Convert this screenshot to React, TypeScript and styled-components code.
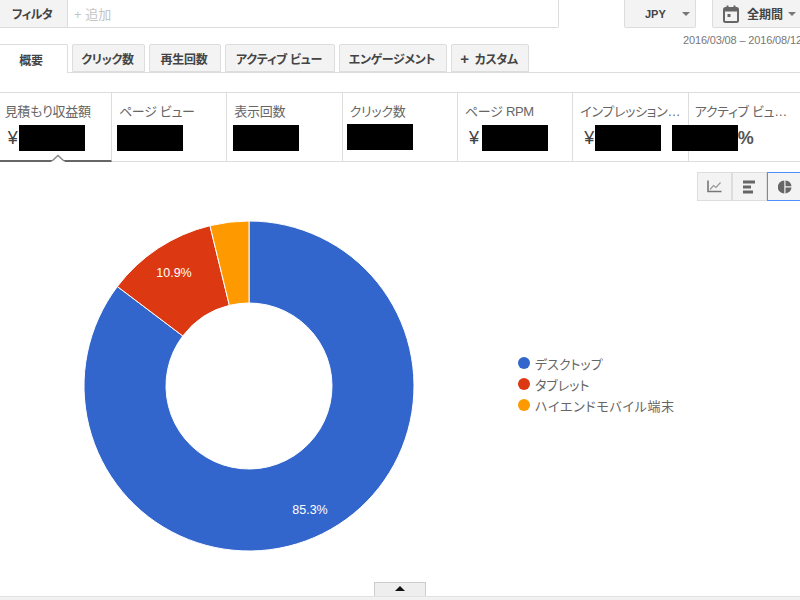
import React from "react";
import styled, { createGlobalStyle } from "styled-components";

const Global = createGlobalStyle`
  html, body { margin: 0; padding: 0; background: #fff; }
  * { box-sizing: border-box; }
  body {
    font-family: "Liberation Sans", "Noto Sans CJK JP", sans-serif;
    font-feature-settings: "palt";
  }
`;

const Page = styled.div`
  width: 800px;
  height: 600px;
  overflow: hidden;
  display: flex;
  flex-direction: column;
  color: #444;
`;

const TopBar = styled.div`
  display: flex;
  height: 28px;
  flex: none;
`;

const FilterBox = styled.div`
  width: 559px;
  flex: none;
  display: flex;
  border-right: 1px solid #ddd;
  border-bottom: 1px solid #ddd;
  border-bottom-right-radius: 2px;
`;

const FilterLabel = styled.div`
  width: 68px;
  background: #f3f3f3;
  border-right: 1px solid #ddd;
  display: flex;
  align-items: center;
  padding-left: 12px;
  font-size: 12px;
  letter-spacing: -0.6px;
  font-weight: 700;
  color: #444;
`;

const AddInput = styled.div`
  padding: 5px 0 0 6px;
  font-size: 13px;
  line-height: 20px;
  color: #c4c4c4;
`;

const DropButton = styled.div<{ $width: number; $left: number; $pad: number }>`
  width: ${(p) => p.$width}px;
  margin-left: ${(p) => p.$left}px;
  padding-left: ${(p) => p.$pad}px;
  flex: none;
  display: flex;
  align-items: center;
  background: #f3f3f3;
  border: 1px solid #ddd;
  border-top: none;
  border-radius: 0 0 2px 2px;
  font-size: 11px;
  font-weight: 700;
  color: #444;
`;

const PeriodLabel = styled.span`
  margin-left: 7px;
  font-size: 12px;
`;

const Caret = styled.span<{ $left: number }>`
  width: 0;
  height: 0;
  margin-left: ${(p) => p.$left}px;
  border-left: 4px solid transparent;
  border-right: 4px solid transparent;
  border-top: 4px solid #777;
`;

const DateRow = styled.div`
  height: 16px;
  flex: none;
  padding: 5px 0 0 683px;
  font-size: 11px;
  letter-spacing: -0.15px;
  line-height: 14px;
  color: #777;
  white-space: nowrap;
`;

const Tabs = styled.div`
  height: 29px;
  flex: none;
  display: flex;
  gap: 4px;
  border-bottom: 1px solid #ddd;
`;

const Tab = styled.div<{ $width: number; $active?: boolean }>`
  width: ${(p) => p.$width}px;
  height: ${(p) => (p.$active ? 29 : 28)}px;
  margin-left: ${(p) => (p.$active ? -1 : 0)}px;
  padding-right: ${(p) => (p.$active ? 5 : 2)}px;
  display: flex;
  align-items: center;
  justify-content: center;
  gap: 6px;
  background: ${(p) => (p.$active ? "#fff" : "#f3f3f3")};
  border: 1px solid #ddd;
  border-bottom: ${(p) => (p.$active ? "none" : "1px solid #ddd")};
  border-radius: 2px 2px 0 0;
  font-size: 12px;
  letter-spacing: -0.3px;
  font-weight: 700;
  color: #444;
  white-space: nowrap;
`;

const PlusMark = styled.span`
  font-size: 15px;
  line-height: 15px;
`;

const Metrics = styled.div`
  margin: 19px 0 0 -3.33px;
  height: 70px;
  flex: none;
  display: flex;
  border-top: 1px solid #ddd;
  border-bottom: 1px solid #ddd;
`;

const Metric = styled.div<{ $active?: boolean; $pad: number }>`
  position: relative;
  flex: none;
  width: 115.33px;
  height: 69px;
  padding: 10px 0 0 ${(p) => p.$pad}px;
  border-right: 1px solid #ddd;
  border-bottom: ${(p) => (p.$active ? "2px solid #666" : "none")};
`;

const MetricTitle = styled.div`
  font-size: 13px;
  letter-spacing: -0.3px;
  line-height: 18px;
  color: #666;
  padding-right: 4px;
  white-space: nowrap;
  overflow: hidden;
  text-overflow: ellipsis;
`;

const MetricValue = styled.div`
  margin-top: 4px;
  display: flex;
  align-items: center;
  height: 26px;
  font-size: 18px;
  color: #444;
`;

const Yen = styled.span<{ $left: number }>`
  margin-left: ${(p) => p.$left}px;
`;

const Suffix = styled.span`
  font-weight: 700;
  color: #555;
`;

const Mask = styled.div<{ $left: number; $top?: number }>`
  flex: none;
  width: 66px;
  height: 26px;
  background: #000;
  margin-left: ${(p) => p.$left}px;
  margin-top: ${(p) => p.$top ?? 0}px;
`;

const Notch = styled.svg`
  position: absolute;
  left: 54px;
  bottom: -2px;
  display: block;
`;

const Toolbar = styled.div`
  margin-top: 10px;
  padding-left: 697px;
  display: flex;
  flex: none;
  height: 29px;
`;

const ToolButton = styled.div<{ $selected?: boolean }>`
  flex: none;
  width: ${(p) => (p.$selected ? 36 : 35)}px;
  height: 29px;
  display: flex;
  align-items: center;
  justify-content: center;
  background: #f3f3f3;
  border: 1px solid ${(p) => (p.$selected ? "#4d90fe" : "#ddd")};
`;

const ChartArea = styled.div`
  flex: 1;
  display: flex;
  align-items: flex-start;
  padding: 20px 0 0 84px;
`;

const PieSvg = styled.svg`
  flex: none;
  display: block;
`;

const PieLabel = styled.text`
  font-family: "Liberation Sans", sans-serif;
  font-size: 12.5px;
  fill: #fff;
  text-anchor: middle;
`;

const Legend = styled.ul`
  list-style: none;
  margin: 133px 0 0 104px;
  padding: 0;
  display: flex;
  flex-direction: column;
  gap: 3px;
`;

const LegendItem = styled.li<{ $spread?: number }>`
  display: flex;
  align-items: center;
  gap: 5px;
  height: 18px;
  font-size: 13px;
  letter-spacing: ${(p) => p.$spread ?? 0}px;
  color: #666;
  white-space: nowrap;
`;

const Dot = styled.span<{ $color: string }>`
  width: 12px;
  height: 12px;
  border-radius: 50%;
  background: ${(p) => p.$color};
`;

const Footer = styled.div`
  flex: none;
  display: flex;
  flex-direction: column;
  align-items: center;
`;

const Handle = styled.div`
  width: 52px;
  height: 14px;
  padding-top: 3px;
  display: flex;
  justify-content: center;
  background: #eee;
  border: 1px solid #ccc;
  border-bottom: none;
`;

const UpArrow = styled.span`
  width: 0;
  height: 0;
  border-left: 5px solid transparent;
  border-right: 5px solid transparent;
  border-bottom: 5px solid #111;
`;

const Strip = styled.div`
  align-self: stretch;
  height: 4px;
  background: #f1f1f1;
  border-top: 1px solid #e2e2e2;
`;

const segments = [
  { value: 85.3, color: "#3366cc" },
  { value: 10.9, color: "#dc3912" },
  { value: 3.8, color: "#ff9900" },
];

const CX = 165;
const CY = 165;
const R = 165;
const r = 83;

function point(radius: number, pct: number): string {
  const a = (pct / 100) * 2 * Math.PI;
  return `${(CX + radius * Math.sin(a)).toFixed(2)} ${(CY - radius * Math.cos(a)).toFixed(2)}`;
}

function arcPath(from: number, to: number): string {
  const large = to - from > 50 ? 1 : 0;
  return `M${point(R, from)} A${R} ${R} 0 ${large} 1 ${point(R, to)} L${point(r, to)} A${r} ${r} 0 ${large} 0 ${point(r, from)} Z`;
}

const Calendar = () => (
  <svg width="18" height="18" viewBox="0 0 18 18" fill="none">
    <rect x="2" y="3" width="14" height="14" rx="1.5" stroke="#666" strokeWidth="2" />
    <rect x="2" y="3" width="14" height="3.5" fill="#666" />
    <rect x="4.5" y="0.5" width="2" height="3" fill="#666" />
    <rect x="11.5" y="0.5" width="2" height="3" fill="#666" />
    <rect x="5.5" y="9" width="3" height="3" fill="#666" />
  </svg>
);

const LineIcon = () => (
  <svg width="15" height="13" viewBox="0 0 15 13" fill="none">
    <path d="M1 0.5V11.5H14.5" stroke="#777" strokeWidth="1.6" />
    <path d="M3 9.5L6.5 5.5l2.5 2L13.5 2.5" stroke="#999" strokeWidth="1.2" />
  </svg>
);

const BarIcon = () => (
  <svg width="13" height="14" viewBox="0 0 13 14">
    <rect x="0" y="0.5" width="12" height="3" fill="#666" />
    <rect x="0" y="5.5" width="8" height="3" fill="#666" />
    <rect x="0" y="10.5" width="10" height="3" fill="#666" />
  </svg>
);

const PieIcon = () => (
  <svg width="14" height="14" viewBox="0 0 14 14">
    <path d="M6.3 0.5v13A6.5 6.5 0 0 1 6.3 .5z" fill="#666" />
    <path d="M7.5 0.5A6.5 6.5 0 0 1 13.5 6.3H7.5z" fill="#666" />
    <path d="M7.5 7.5h6A6.5 6.5 0 0 1 7.5 13.5z" fill="#666" />
  </svg>
);

const tabs = [
  { label: "クリック数", width: 73 },
  { label: "再生回数", width: 72 },
  { label: "アクティブ ビュー", width: 110 },
  { label: "エンゲージメント", width: 108 },
];

const metrics = [
  { title: "見積もり収益額", pad: 8, yen: 3, mask: 1 },
  { title: "ページ ビュー", pad: 7, mask: -2 },
  { title: "表示回数", pad: 7, mask: -1 },
  { title: "クリック数", pad: 7, mask: -3, top: -2 },
  { title: "ページ RPM", pad: 7, yen: 4, mask: 3 },
  { title: "インプレッション収益額", pad: 7, yen: 4, mask: 1 },
  { title: "アクティブ ビュー視認", pad: 6, mask: -23, suffix: "%" },
];

export default function App() {
  let acc = 0;
  return (
    <Page>
      <Global />
      <TopBar>
        <FilterBox>
          <FilterLabel>フィルタ</FilterLabel>
          <AddInput>+ 追加</AddInput>
        </FilterBox>
        <DropButton $width={72} $left={65} $pad={20}>
          JPY
          <Caret $left={16} />
        </DropButton>
        <DropButton $width={100} $left={16} $pad={9}>
          <Calendar />
          <PeriodLabel>全期間</PeriodLabel>
          <Caret $left={5} />
        </DropButton>
      </TopBar>
      <DateRow>2016/03/08 – 2016/08/12</DateRow>
      <Tabs>
        <Tab $width={69} $active>概要</Tab>
        {tabs.map((t) => (
          <Tab key={t.label} $width={t.width}>{t.label}</Tab>
        ))}
        <Tab $width={78}><PlusMark>+</PlusMark>カスタム</Tab>
      </Tabs>
      <Metrics>
        {metrics.map((m, i) => (
          <Metric key={m.title} $pad={m.pad} $active={i === 0}>
            <MetricTitle>{m.title}</MetricTitle>
            <MetricValue>
              {m.yen !== undefined && <Yen $left={m.yen}>¥</Yen>}
              <Mask $left={m.mask} $top={m.top} />
              {m.suffix && <Suffix>{m.suffix}</Suffix>}
            </MetricValue>
            {i === 0 && (
              <Notch width="14" height="8" viewBox="0 0 14 8">
                <polygon points="0,8 7,1 14,8" fill="#fff" />
                <polyline points="1,7 7,1.5 13,7" fill="none" stroke="#888" strokeWidth="1.5" />
              </Notch>
            )}
          </Metric>
        ))}
      </Metrics>
      <Toolbar>
        <ToolButton><LineIcon /></ToolButton>
        <ToolButton><BarIcon /></ToolButton>
        <ToolButton $selected><PieIcon /></ToolButton>
      </Toolbar>
      <ChartArea>
        <PieSvg width="330" height="330" viewBox="0 0 330 330">
          {segments.map((s) => {
            const from = acc;
            acc += s.value;
            return <path key={s.color} d={arcPath(from, acc)} fill={s.color} stroke="#fff" strokeWidth="1" />;
          })}
          <PieLabel x="226" y="293">85.3%</PieLabel>
          <PieLabel x="90" y="56">10.9%</PieLabel>
        </PieSvg>
        <Legend>
          <LegendItem><Dot $color="#3366cc" />デスクトップ</LegendItem>
          <LegendItem><Dot $color="#dc3912" />タブレット</LegendItem>
          <LegendItem $spread={0.7}><Dot $color="#ff9900" />ハイエンドモバイル端末</LegendItem>
        </Legend>
      </ChartArea>
      <Footer>
        <Handle><UpArrow /></Handle>
        <Strip />
      </Footer>
    </Page>
  );
}
